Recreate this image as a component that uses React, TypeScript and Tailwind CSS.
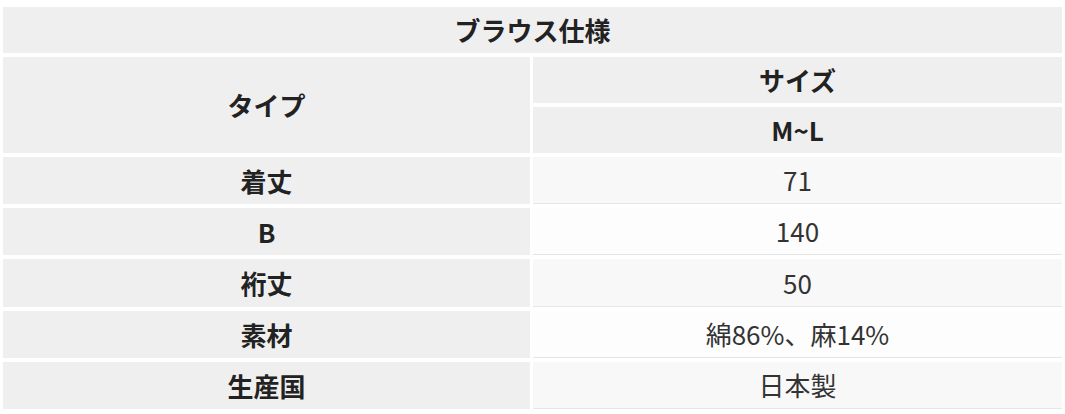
import React from "react";

const rows: [string, string][] = [
  ["着丈", "71"],
  ["B", "140"],
  ["裄丈", "50"],
  ["素材", "綿86%、麻14%"],
  ["生産国", "日本製"],
];

export default function App() {
  return (
    <div
      className="w-[1065px] h-[414px] bg-white pt-[7px] pl-[3px] pr-[3px] text-[#222]"
      style={{ fontFamily: '"Noto Sans CJK JP", "Noto Sans", sans-serif' }}
    >
      <div className="grid grid-cols-[527px_529px] grid-rows-[46px_46px_46px_47px_47px_48px_47px_47px] gap-x-[3px] gap-y-[4px] text-[26px] leading-none">
        <div className="col-span-2 bg-[#efefef] flex items-center justify-center font-bold">
          ブラウス仕様
        </div>
        <div className="row-span-2 bg-[#efefef] flex items-center justify-center font-bold">
          タイプ
        </div>
        <div className="bg-[#efefef] flex items-center justify-center font-bold">
          サイズ
        </div>
        <div className="bg-[#efefef] flex items-center justify-center font-bold">
          M~L
        </div>
        {rows.map(([k, v], i) => (
          <React.Fragment key={k}>
            <div className="bg-[#efefef] flex items-center justify-center font-bold">
              {k}
            </div>
            <div
              className={
                (i % 2 === 0 ? "bg-[#f8f8f8]" : "bg-[#fdfdfd]") +
                " border-b border-[#e6e6e6] flex items-center justify-center text-[#333]"
              }
            >
              {v}
            </div>
          </React.Fragment>
        ))}
      </div>
    </div>
  );
}
